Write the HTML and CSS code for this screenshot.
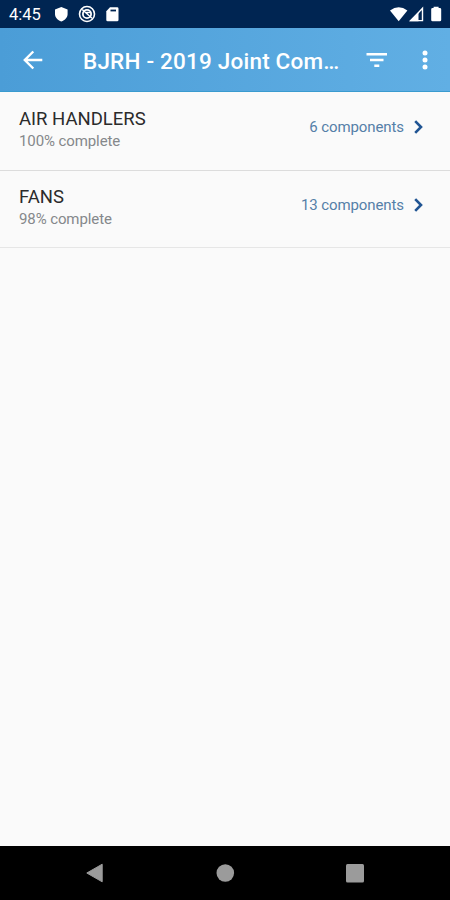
FILE: index.html
```html
<!DOCTYPE html>
<html lang="en">
<head>
  <meta charset="UTF-8" />
  <meta name="viewport" content="width=device-width, initial-scale=1" />
  <title>BJRH - 2019 Joint Commission</title>
  <link rel="stylesheet" href="styles.css">
</head>
<body>
  <div class="screen">
    <div class="status-bar">
      <span class="time">4:45</span>
      <svg class="status-left" width="66" height="18" viewBox="0 0 66 18">
        <path d="M7.3 2 L13.6 4.4 V9 C13.6 12.5 11 15.2 7.3 16.4 C3.6 15.2 1 12.5 1 9 V4.4 Z" fill="#fff" />
        <circle cx="33" cy="9" r="7.5" fill="none" stroke="#fff" stroke-width="1.6" />
        <circle cx="33" cy="9" r="4.1" fill="none" stroke="#fff" stroke-width="1.8" />
        <path d="M28.2 4.5 L38 13.3 M32.2 7.5 H36.5" stroke="#fff" stroke-width="1.5" />
        <path d="M56 2.3 H63.1 Q64.5 2.3 64.5 3.7 V14.9 Q64.5 16.3 63.1 16.3 H53.7 Q52.3 16.3 52.3 14.9 V6.3 Z" fill="#fff" />
        <path d="M56.5 5.5 H62" stroke="#002552" stroke-width="1.8" />
      </svg>
      <svg class="status-right" width="54" height="18" viewBox="0 0 54 18">
        <path d="M1 5.5 Q9.7 -.8 18.4 5.5 L9.7 16.3 Z" fill="#fff" />
        <path d="M33.5 3.2 V15.6 H22 Z" fill="none" stroke="#fff" stroke-width="1.4" />
        <path d="M20 16.3 L29.5 7 V16.3 Z" fill="#fff" />
        <path d="M44.6 2.9 V1.7 H49.6 V2.9 H50.8 Q52.2 2.9 52.2 4.3 V15 Q52.2 16.3 50.8 16.3 H43.6 Q42.2 16.3 42.2 15 V4.3 Q42.2 2.9 43.6 2.9 Z" fill="#fff" />
      </svg>
    </div>

    <header class="app-bar">
      <svg class="back" width="20" height="20" viewBox="0 0 20 20">
        <path d="M19.3 10 H2.3 M10.3 1.5 L1.8 10 L10.3 18.5" />
      </svg>
      <h1>BJRH - 2019 Joint Com…</h1>
      <svg class="filter" width="22" height="14" viewBox="0 0 22 14">
        <path d="M.5 1.3 H21 M4 7 H17.5 M8.3 12.7 H13.3" />
      </svg>
      <svg class="more" width="6" height="20" viewBox="0 0 6 20">
        <circle cx="3" cy="3" r="2.5" />
        <circle cx="3" cy="10" r="2.5" />
        <circle cx="3" cy="17" r="2.5" />
      </svg>
    </header>

    <main class="list">
      <div class="item">
        <div class="info">
          <div class="name">AIR HANDLERS</div>
          <div class="progress">100% complete</div>
        </div>
        <div class="count">6 components</div>
        <svg class="chevron" width="9" height="14" viewBox="0 0 9 14">
          <path d="M1.2 1.2 L7 7 L1.2 12.8" />
        </svg>
      </div>
      <div class="item">
        <div class="info">
          <div class="name">FANS</div>
          <div class="progress">98% complete</div>
        </div>
        <div class="count">13 components</div>
        <svg class="chevron" width="9" height="14" viewBox="0 0 9 14">
          <path d="M1.2 1.2 L7 7 L1.2 12.8" />
        </svg>
      </div>
    </main>

    <nav class="nav-bar">
      <svg width="20" height="20" viewBox="0 0 20 20">
        <path d="M17.2 1.2 V18.8 L1.8 10 Z" stroke="#9b9b9b" stroke-linejoin="round" />
      </svg>
      <svg width="20" height="20" viewBox="0 0 20 20">
        <circle cx="10.3" cy="10" r="8.8" />
      </svg>
      <svg width="20" height="20" viewBox="0 0 20 20">
        <rect x="1" y="1" width="18" height="18.5" rx="1.5" />
      </svg>
    </nav>
  </div>
</body>
</html>
```

FILE: styles.css
```css
body {
  margin: 0;
  font-family: Roboto, sans-serif;
  background: #fafafa;
}

.screen {
  display: flex;
  flex-direction: column;
  height: 900px;
  overflow: hidden;
}

.status-bar {
  display: flex;
  align-items: center;
  box-sizing: border-box;
  height: 28px;
  padding: 0 7px 0 9px;
  background: #002552;
  color: #fff;
}

.time {
  width: 45px;
  font-size: 16.5px;
  line-height: 28px;
  padding-top: 2px;
}

.status-right {
  margin-left: auto;
}

.app-bar {
  display: flex;
  align-items: center;
  box-sizing: border-box;
  height: 64px;
  padding: 0 22px 0 23px;
  background: linear-gradient(to right, #4b9dd7, #61afe4);
  border-bottom: 1px solid #3a9bcf;
  color: #fff;
}

.app-bar h1 {
  width: 283px;
  margin: 3px 0 0 40px;
  font-size: 22.5px;
  font-weight: 500;
  line-height: 28px;
  letter-spacing: 0.2px;
  white-space: nowrap;
}

.back,
.filter {
  fill: none;
  stroke: #fff;
  stroke-width: 2.4;
}

.more {
  margin-left: auto;
  fill: #fff;
}

.list {
  flex: 1;
}

.item {
  display: flex;
  align-items: center;
  box-sizing: border-box;
  height: 77px;
  padding: 0 27px 8px 19px;
  border-bottom: 1px solid #dcdcdc;
}

.item:first-child {
  height: 79px;
  padding-bottom: 9px;
}

.item:last-child {
  padding-bottom: 9px;
  border-bottom-color: #e6e6e6;
}

.info {
  flex: 1;
  padding-top: 7px;
}

.name {
  font-size: 18.5px;
  line-height: 22px;
  color: #2b2b2b;
}

.progress {
  font-size: 15px;
  line-height: 22px;
  letter-spacing: -0.1px;
  color: #85888b;
}

.count {
  font-size: 15px;
  letter-spacing: -0.1px;
  color: #557fa8;
}

.chevron {
  margin-left: 10px;
  fill: none;
  stroke: #205493;
  stroke-width: 2.6;
}

.nav-bar {
  display: flex;
  justify-content: space-between;
  align-items: center;
  box-sizing: border-box;
  height: 54px;
  padding: 0 85px;
  background: #000;
  fill: #9b9b9b;
}
```
